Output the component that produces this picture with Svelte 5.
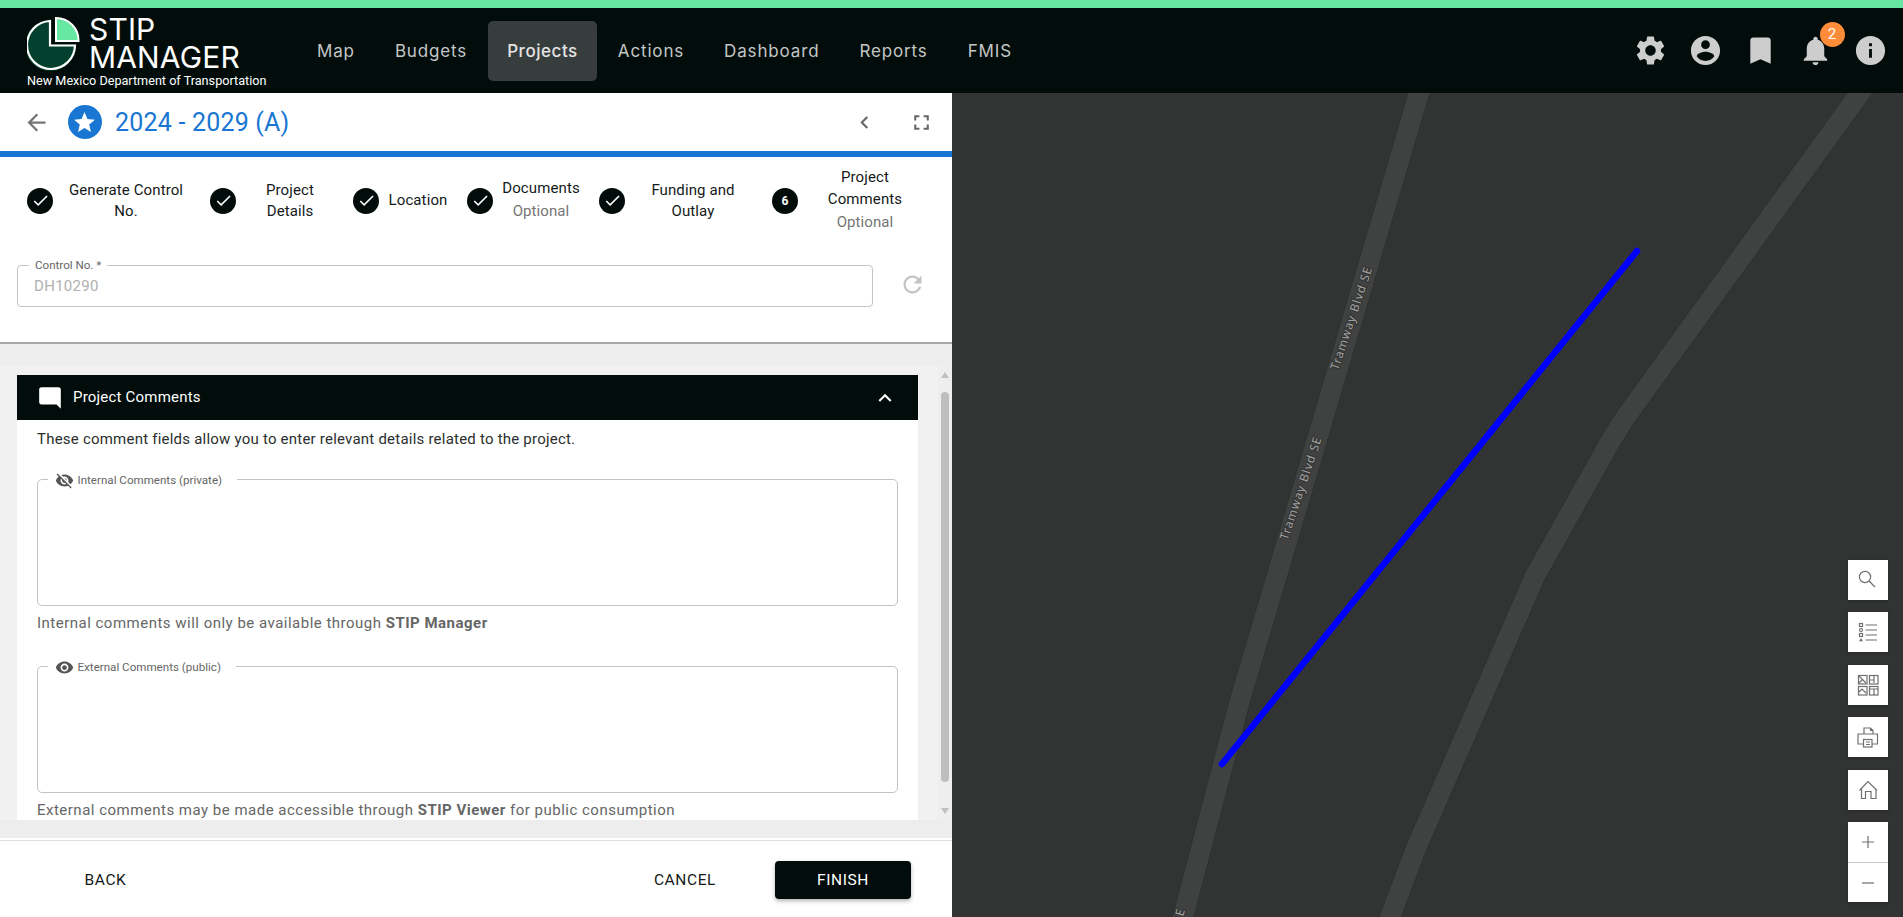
<script>
  const nav = ['Map', 'Budgets', 'Projects', 'Actions', 'Dashboard', 'Reports', 'FMIS'];
  const steps = [
    { id: 'a', lines: ['Generate Control', 'No.'] },
    { id: 'b', lines: ['Project', 'Details'] },
    { id: 'c', lines: ['Location'] },
    { id: 'd', lines: ['Documents'], optional: true },
    { id: 'e', lines: ['Funding and', 'Outlay'] },
    { id: 'f', lines: ['Project', 'Comments'], optional: true, num: '6' }
  ];
  const topIcons = [
    'M19.14 12.94c.04-.3.06-.61.06-.94 0-.32-.02-.64-.07-.94l2.03-1.58c.18-.14.23-.41.12-.61l-1.92-3.32c-.12-.22-.37-.29-.59-.22l-2.39.96c-.5-.38-1.03-.7-1.62-.94l-.36-2.54c-.04-.24-.24-.41-.48-.41h-3.84c-.24 0-.43.17-.47.41l-.36 2.54c-.59.24-1.13.57-1.62.94l-2.39-.96c-.22-.08-.47 0-.59.22L2.74 8.87c-.12.21-.08.47.12.61l2.03 1.58c-.05.3-.09.63-.09.94s.02.64.07.94l-2.03 1.58c-.18.14-.23.41-.12.61l1.92 3.32c.12.22.37.29.59.22l2.39-.96c.5.38 1.03.7 1.62.94l.36 2.54c.05.24.24.41.48.41h3.84c.24 0 .44-.17.47-.41l.36-2.54c.59-.24 1.13-.56 1.62-.94l2.39.96c.22.08.47 0 .59-.22l1.92-3.32c.12-.22.07-.47-.12-.61l-2.01-1.58zM12 15.6c-1.98 0-3.6-1.62-3.6-3.6s1.62-3.6 3.6-3.6 3.6 1.62 3.6 3.6-1.62 3.6-3.6 3.6z',
    'M12 2C6.48 2 2 6.48 2 12s4.48 10 10 10 10-4.48 10-10S17.52 2 12 2zm0 3c1.66 0 3 1.34 3 3s-1.34 3-3 3-3-1.34-3-3 1.34-3 3-3zm0 14.2c-2.5 0-4.71-1.28-6-3.22.03-1.99 4-3.08 6-3.08 1.99 0 5.97 1.09 6 3.08-1.29 1.94-3.5 3.22-6 3.22z',
    'M17 3H7c-1.1 0-1.99.9-1.99 2L5 21l7-3 7 3V5c0-1.1-.9-2-2-2z',
    'M12 22c1.1 0 2-.9 2-2h-4c0 1.1.89 2 2 2zm6-6v-5c0-3.07-1.64-5.64-4.5-6.32V4c0-.83-.67-1.5-1.5-1.5s-1.5.67-1.5 1.5v.68C7.63 5.36 6 7.92 6 11v5l-2 2v1h16v-1l-2-2z',
    'M12 2C6.48 2 2 6.48 2 12s4.48 10 10 10 10-4.48 10-10S17.52 2 12 2zm1 15h-2v-6h2v6zm0-8h-2V7h2v2z'
  ];
  const road1 = '1432,50 1419,93 1366,273 1284.5,550 1240,700 1183,917 1176,940';
  const road2 = '1878,68 1860,93 1625,418 1610,442 1535,576 1417,846 1390,917 1380,945';
</script>

<div class="app">
  <header class="topbar">
    <div class="brand">
      <div class="brand-row">
        <svg class="logo" viewBox="27 15 54 56" aria-hidden="true">
          <path d="M50 21A24 24 0 1 0 75 45.500H50Z" fill="#03402d" stroke="#03402d" stroke-width="3" transform="translate(-0.500 0.500)" />
          <path d="M50 21A24 24 0 1 0 75 45.500H50Z" fill="#03402d" stroke="#fff" stroke-width="2.200" />
          <path d="M56 18A22.500 22.500 0 0 1 78.500 41H56Z" fill="#66e8a2" stroke="#fff" stroke-width="2" />
        </svg>
        <div class="brand-name">STIP<br />MANAGER</div>
      </div>
      <div class="brand-sub">New Mexico Department of Transportation</div>
    </div>
    <nav class="nav">
      {#each nav as item}
        <span class="nav-item" class:active={item === 'Projects'}>{item}</span>
      {/each}
    </nav>
    <div class="top-icons">
      {#each topIcons as d, i}
        <div class="top-icon">
          <svg viewBox="0 0 24 24"><path {d} fill="#cdcdcd" /></svg>
          {#if i === 3}<span class="badge">2</span>{/if}
        </div>
      {/each}
    </div>
  </header>

  <main class="main">
    <section class="panel">
      <div class="title-row">
        <svg class="back" viewBox="0 0 24 24"><path d="M20 11H7.83l5.59-5.59L12 4l-8 8 8 8 1.41-1.41L7.83 13H20v-2z" /></svg>
        <span class="star">
          <svg viewBox="0 0 24 24"><path d="M12 17.27 18.18 21l-1.64-7.03L22 9.24l-7.19-.61L12 2 9.19 8.63 2 9.24l5.46 4.73L5.82 21z" /></svg>
        </span>
        <h1>2024 - 2029 (A)</h1>
        <svg class="collapse" viewBox="0 0 24 24"><path d="M15.41 7.41 14 6l-6 6 6 6 1.41-1.41L10.83 12z" /></svg>
        <svg class="fullscreen" viewBox="0 0 24 24"><path d="M7 14H5v5h5v-2H7v-3zm-2-4h2V7h3V5H5v5zm12 7h-3v2h5v-5h-2v3zM14 5v2h3v3h2V5h-5z" /></svg>
      </div>
      <div class="blue-bar"></div>

      <div class="stepper">
        {#each steps as s}
          <div class="step">
            <span class="step-dot">
              {#if s.num}{s.num}{:else}
                <svg viewBox="0 0 24 24"><path d="M9 16.17 4.83 12l-1.42 1.41L9 19 21 7l-1.41-1.41z" /></svg>
              {/if}
            </span>
            <div class="step-label {s.id}">
              {#each s.lines as l}<div>{l}</div>{/each}
              {#if s.optional}<div class="optional">Optional</div>{/if}
            </div>
          </div>
        {/each}
      </div>

      <div class="control-row">
        <div class="control-field">
          <span class="control-label">Control No. *</span>
          <span class="control-value">DH10290</span>
        </div>
        <svg class="refresh" viewBox="0 0 24 24"><path d="M17.65 6.35C16.2 4.9 14.21 4 12 4c-4.42 0-7.99 3.58-7.99 8s3.57 8 7.99 8c3.73 0 6.84-2.55 7.73-6h-2.08c-.82 2.33-3.04 4-5.65 4-3.31 0-6-2.69-6-6s2.69-6 6-6c1.66 0 3.14.69 4.22 1.78L13 11h7V4l-2.35 2.35z" /></svg>
      </div>

      <div class="band top"></div>

      <div class="scroller">
        <div class="scroll-content">
          <div class="acc-head">
            <svg class="acc-icon" viewBox="0 0 24 24"><path d="M21.99 4c0-1.1-.89-2-1.99-2H4c-1.1 0-2 .9-2 2v12c0 1.1.9 2 2 2h14l4 4-.01-18z" /></svg>
            <span class="acc-title">Project Comments</span>
            <svg class="acc-chevron" viewBox="0 0 24 24"><path d="M12 8l-6 6 1.41 1.41L12 10.83l4.59 4.58L18 14z" /></svg>
          </div>
          <div class="acc-body">
            <p class="intro">These comment fields allow you to enter relevant details related to the project.</p>

            <div class="area first">
              <div class="area-label private">
                <svg viewBox="0 0 24 24"><path d="M12 7c2.76 0 5 2.24 5 5 0 .65-.13 1.26-.36 1.83l2.92 2.92c1.51-1.26 2.7-2.89 3.43-4.75-1.73-4.39-6-7.5-11-7.5-1.4 0-2.74.25-3.98.7l2.16 2.16C10.74 7.13 11.35 7 12 7zM2 4.27l2.28 2.28.46.46C3.08 8.3 1.78 10.02 1 12c1.73 4.39 6 7.5 11 7.5 1.55 0 3.03-.3 4.38-.84l.42.42L19.73 22 21 20.73 3.27 3 2 4.27zM7.53 9.8l1.55 1.55c-.05.21-.08.43-.08.65 0 1.66 1.34 3 3 3 .22 0 .44-.03.65-.08l1.55 1.55c-.67.33-1.41.53-2.2.53-2.76 0-5-2.24-5-5 0-.79.2-1.53.53-2.2zm4.31-.78l3.15 3.15.02-.16c0-1.66-1.34-3-3-3l-.17.01z" /></svg>
                <span>Internal Comments (private)</span>
              </div>
            </div>
            <p class="helper">Internal comments will only be available through <b>STIP Manager</b></p>

            <div class="area second">
              <div class="area-label public">
                <svg viewBox="0 0 24 24"><path d="M12 4.5C7 4.5 2.73 7.61 1 12c1.73 4.39 6 7.5 11 7.5s9.27-3.11 11-7.5c-1.73-4.39-6-7.5-11-7.5zM12 17c-2.76 0-5-2.24-5-5s2.24-5 5-5 5 2.24 5 5-2.24 5-5 5zm0-8c-1.66 0-3 1.34-3 3s1.34 3 3 3 3-1.34 3-3-1.34-3-3-3z" /></svg>
                <span>External Comments (public)</span>
              </div>
            </div>
            <p class="helper">External comments may be made accessible through <b>STIP Viewer</b> for public consumption</p>
          </div>
        </div>
        <div class="scrollbar">
          <span class="arrow up"></span>
          <span class="thumb"></span>
          <span class="arrow down"></span>
        </div>
      </div>

      <div class="band bottom"></div>

      <footer class="footer">
        <div class="footer-inner">
          <span class="btn back-btn">BACK</span>
          <span class="btn cancel-btn">CANCEL</span>
          <span class="btn finish-btn">FINISH</span>
        </div>
      </footer>
    </section>

    <section class="map">
      <svg class="map-canvas" viewBox="952 93 951 824" aria-hidden="true">
        <polyline points={road1} class="road-edge" />
        <polyline points={road2} class="road-edge" />
        <polyline points={road1} class="road" />
        <polyline points={road2} class="road" />
        <line x1="1222" y1="764" x2="1637" y2="251" class="route" />
        <text class="road-label" transform="translate(1351 318) rotate(-71.5)">Tramway Blvd SE</text>
        <text class="road-label" transform="translate(1300.5 488) rotate(-71.5)">Tramway Blvd SE</text>
        <text class="road-label" transform="translate(1180 912) rotate(-75)">E</text>
      </svg>

      <div class="map-tools">
        <div class="tool">
          <svg viewBox="0 0 40 40"><circle cx="17" cy="17" r="5.600" /><path d="M21 21l6 6" /></svg>
        </div>
        <div class="tool">
          <svg viewBox="0 0 40 40">
            <path d="M17.500 13h11.500M17.500 18h11.500M17.500 23h11.500M17.500 28h11.500" />
            <rect x="11.500" y="11.500" width="3" height="3" /><circle cx="13" cy="18" r="1.500" />
            <rect x="11.500" y="21.500" width="3" height="3" /><path class="solid" d="M13 26l2 3.300h-4z" />
          </svg>
        </div>
        <div class="tool">
          <svg viewBox="0 0 40 40">
            <rect x="10.500" y="10.500" width="8.500" height="8.500" /><rect x="21.500" y="10.500" width="8.500" height="8.500" />
            <rect x="10.500" y="21.500" width="8.500" height="8.500" /><rect x="21.500" y="21.500" width="8.500" height="8.500" />
            <path d="M11 11l7 7M14 15l-3 3M22 15h4v-4M26 15v3M11 27l3-3 4 4M22 24h8M26 24v6" />
          </svg>
        </div>
        <div class="tool">
          <svg viewBox="0 0 40 40">
            <path d="M16 17v-6h6.500l2.500 2.500V17M22.500 11v2.500h2.500" />
            <path d="M15.500 27h-5.500v-10h19.500v10h-5.500" />
            <rect x="15.500" y="22.500" width="8.500" height="7.500" />
            <path d="M18 25h4M18 27.500h4" />
          </svg>
        </div>
        <div class="tool">
          <svg viewBox="0 0 40 40">
            <path d="M11.500 20.500l8.500-9 9 9M13.500 19v9.500h4v-7h5.500v7h5v-9.500" />
          </svg>
        </div>
        <div class="tool zoom">
          <div class="zoom-cell">
            <svg viewBox="0 0 40 40"><path d="M20 14v12M14 20h12" /></svg>
          </div>
          <div class="zoom-cell">
            <svg viewBox="0 0 40 40"><path d="M14 20h12" /></svg>
          </div>
        </div>
      </div>
    </section>
  </main>
</div>

<style>
  :global(body) {
    margin: 0;
    font-family: Roboto, "Liberation Sans", sans-serif;
    overflow: hidden;
  }
  .app {
    width: 1903px;
    height: 917px;
    display: flex;
    flex-direction: column;
    overflow: hidden;
  }

  /* top bar */
  .topbar {
    box-sizing: border-box;
    height: 93px;
    border-top: 8px solid #66e8a2;
    background: #020d0b;
    display: flex;
    align-items: center;
    padding: 0 15.5px 0 27px;
    flex: none;
  }
  .brand {
    width: 271px;
    flex: none;
    align-self: flex-start;
    margin-top: 7px;
    color: #fff;
  }
  .brand-row {
    display: flex;
    gap: 8px;
    height: 56px;
  }
  .logo {
    width: 54px;
    height: 56px;
    flex: none;
  }
  .brand-name {
    font-family: Inter, sans-serif;
    font-size: 30px;
    font-weight: 400;
    line-height: 27.5px;
    padding-top: 1px;
    letter-spacing: 0.15px;
  }
  .brand-sub {
    margin-top: 2px;
    font-size: 12.65px;
    font-weight: 400;
    line-height: 15px;
    white-space: nowrap;
  }
  .nav {
    display: flex;
    gap: 2px;
    align-items: center;
  }
  .nav-item {
    height: 60px;
    display: flex;
    align-items: center;
    padding: 0 19px;
    border-radius: 5px;
    font-family: Inter, sans-serif;
    font-size: 17px;
    letter-spacing: 0.85px;
    color: #c4c6c5;
  }
  .nav-item.active {
    background: #373d3c;
    color: #e4e4e4;
    font-weight: 500;
    letter-spacing: 0.55px;
  }
  .top-icons {
    margin-left: auto;
    display: flex;
    gap: 20px;
  }
  .top-icon {
    width: 35px;
    height: 35px;
    position: relative;
  }
  .top-icon svg {
    width: 35px;
    height: 35px;
    display: block;
  }
  .badge {
    position: absolute;
    left: 22px;
    top: -11px;
    width: 25px;
    height: 25px;
    border-radius: 50%;
    background: #ff8c38;
    color: #fff;
    font-size: 15px;
    line-height: 25px;
    text-align: center;
  }

  /* layout */
  .main {
    flex: 1;
    display: flex;
    min-height: 0;
  }
  .panel {
    width: 952px;
    flex: none;
    display: flex;
    flex-direction: column;
    background: #fff;
  }

  /* title */
  .title-row {
    height: 58px;
    display: flex;
    align-items: center;
    padding-left: 22.5px;
    flex: none;
    box-sizing: border-box;
  }
  .back {
    width: 27px;
    height: 27px;
    fill: #757575;
    flex: none;
  }
  .star {
    width: 34px;
    height: 34px;
    border-radius: 50%;
    background: #1976d2;
    margin-left: 18px;
    display: flex;
    align-items: center;
    justify-content: center;
    flex: none;
  }
  .star svg {
    width: 25px;
    height: 25px;
    fill: #fff;
  }
  h1 {
    margin: 0 0 0 13.5px;
    font-size: 25px;
    font-weight: 400;
    color: #1976d2;
    letter-spacing: 0.2px;
  }
  .collapse {
    margin-left: auto;
    width: 25px;
    height: 25px;
    fill: #666;
    flex: none;
  }
  .fullscreen {
    width: 25px;
    height: 25px;
    fill: #666;
    margin-left: 32px;
    margin-right: 18.5px;
    flex: none;
  }
  .blue-bar {
    height: 6px;
    background: #1976d2;
    flex: none;
  }

  /* stepper */
  .stepper {
    height: 87px;
    box-sizing: border-box;
    padding-left: 27px;
    display: grid;
    grid-template-columns: 183px 143px 114px 132px 173px 1fr;
    align-items: center;
    flex: none;
  }
  .step {
    display: flex;
    align-items: center;
    gap: 8px;
  }
  .step-dot {
    width: 26px;
    height: 26px;
    border-radius: 50%;
    background: #020d0b;
    color: #fff;
    flex: none;
    display: flex;
    align-items: center;
    justify-content: center;
    font-size: 12px;
    font-weight: 700;
  }
  .step-dot svg {
    width: 19px;
    height: 19px;
    fill: #fff;
  }
  .step-label {
    font-size: 15px;
    line-height: 21px;
    text-align: center;
    color: #141a19;
    letter-spacing: 0.1px;
    white-space: nowrap;
  }
  .step-label.a { width: 130px; }
  .step-label.b { width: 92px; }
  .step-label.c { width: 62px; }
  .step-label.d { width: 80px; line-height: 23px; padding-bottom: 2px; }
  .step-label.e { width: 120px; }
  .step-label.f { width: 118px; line-height: 22.5px; padding-bottom: 2px; }
  .optional {
    color: #757575;
  }

  /* control no */
  .control-row {
    box-sizing: border-box;
    margin-top: 21px;
    padding: 0 0 35px 17px;
    height: 79px;
    border-bottom: 2px solid #a8a8a8;
    display: flex;
    align-items: flex-start;
    gap: 25.5px;
    flex: none;
  }
  .control-field {
    box-sizing: border-box;
    width: 856px;
    height: 42px;
    border: 1px solid #c4c4c4;
    border-radius: 4px;
    position: relative;
    display: flex;
    align-items: center;
    padding: 0 16px 1px;
  }
  .control-label {
    position: absolute;
    left: 11px;
    top: -8px;
    padding: 0 6px;
    background: #fff;
    font-size: 11.6px;
    line-height: 14px;
    color: #666;
  }
  .control-value {
    font-size: 15px;
    letter-spacing: 0.3px;
    color: #b0b0b0;
  }
  .refresh {
    width: 27px;
    height: 27px;
    fill: #c4c4c4;
    margin-top: 5.5px;
    flex: none;
  }

  /* bands */
  .band {
    background: #ededed;
    flex: none;
  }
  .band.top { height: 21px; }
  .band.bottom { height: 18px; }

  /* scroll area */
  .scroller {
    height: 455px;
    flex: none;
    display: flex;
    background: #f1f1f1;
    overflow: hidden;
  }
  .scroll-content {
    box-sizing: border-box;
    width: 938px;
    padding: 10px 20px 0 17px;
    flex: none;
  }
  .acc-head {
    height: 45px;
    background: #020d0b;
    display: flex;
    align-items: center;
    color: #fff;
    padding-left: 20px;
  }
  .acc-icon {
    width: 26px;
    height: 26px;
    fill: #fff;
    flex: none;
    margin-top: 1px;
  }
  .acc-title {
    margin-left: 10px;
    font-size: 15px;
    font-weight: 400;
    letter-spacing: 0.2px;
    margin-bottom: 1px;
  }
  .acc-chevron {
    margin-left: auto;
    margin-right: 20px;
    width: 26px;
    height: 26px;
    fill: #fff;
  }
  .acc-body {
    background: #fff;
    padding: 8px 20px 12px 20px;
  }
  .intro {
    margin: 0;
    font-size: 15px;
    line-height: 22px;
    letter-spacing: 0.22px;
    color: #2a2f2e;
  }
  .area {
    box-sizing: border-box;
    height: 127px;
    border: 1px solid #c4c4c4;
    border-radius: 5px;
    position: relative;
  }
  .area.first { margin-top: 29px; }
  .area.second { margin-top: 32px; }
  .area-label {
    position: absolute;
    left: 10px;
    top: -10px;
    height: 20px;
    background: #fff;
    padding: 0 15px 0 6.5px;
    display: flex;
    align-items: center;
    gap: 4px;
    font-size: 11.6px;
    color: #666;
    white-space: nowrap;
  }
  .area-label svg {
    width: 19px;
    height: 19px;
    fill: #555;
    flex: none;
  }
  .helper {
    margin: 6px 0 0;
    font-size: 15px;
    line-height: 22px;
    letter-spacing: 0.49px;
    color: #666;
    white-space: nowrap;
  }
  .helper b {
    font-weight: 700;
  }

  /* scrollbar */
  .scrollbar {
    width: 14px;
    background: #eee;
    position: relative;
    flex: none;
  }
  .thumb {
    position: absolute;
    left: 3px;
    top: 27px;
    width: 8px;
    height: 390px;
    border-radius: 4px;
    background: #bebebe;
  }
  .arrow {
    position: absolute;
    left: 2.5px;
    width: 0;
    height: 0;
    border-left: 4.5px solid transparent;
    border-right: 4.5px solid transparent;
  }
  .arrow.up {
    top: 7px;
    border-bottom: 6px solid #c0c0c0;
  }
  .arrow.down {
    top: 443px;
    border-top: 6px solid #c0c0c0;
  }

  /* footer */
  .footer {
    flex: 1;
    padding-top: 2px;
    display: flex;
    min-height: 0;
  }
  .footer-inner {
    flex: 1;
    border-top: 1px solid #dedede;
    display: flex;
    align-items: center;
    padding: 2px 41px 0 84.5px;
  }
  .btn {
    font-size: 15.5px;
    font-weight: 400;
    letter-spacing: 0.6px;
    color: #141a19;
  }
  .cancel-btn {
    margin-left: auto;
  }
  .finish-btn {
    box-sizing: border-box;
    width: 136px;
    height: 38px;
    margin-left: 59px;
    border-radius: 4px;
    background: #020d0b;
    color: #fff;
    display: flex;
    align-items: center;
    justify-content: center;
    box-shadow: 0 2px 4px rgba(0, 0, 0, 0.3);
  }

  /* map */
  .map {
    flex: 1;
    position: relative;
    background: #323433;
    overflow: hidden;
  }
  .map-canvas {
    position: absolute;
    inset: 0;
    width: 100%;
    height: 100%;
  }
  .road {
    fill: none;
    stroke: #404241;
    stroke-width: 20;
    stroke-linejoin: round;
  }
  .road-edge {
    fill: none;
    stroke: #2e302f;
    stroke-width: 21.5;
    stroke-linejoin: round;
  }
  .route {
    stroke: #0000ff;
    stroke-width: 6.5;
    stroke-linecap: round;
  }
  .road-label {
    font-family: "Noto Sans", "Open Sans", sans-serif;
    font-size: 12px;
    letter-spacing: 0.9px;
    fill: #a0a0a0;
    stroke: #333;
    stroke-width: 2px;
    paint-order: stroke;
    text-anchor: middle;
    dominant-baseline: central;
  }
  .map-tools {
    position: absolute;
    left: 896px;
    top: 467px;
    width: 40px;
    display: flex;
    flex-direction: column;
    gap: 12.4px;
  }
  .tool {
    width: 40px;
    height: 40px;
    background: #fff;
    box-shadow: 0 1px 3px rgba(0, 0, 0, 0.25);
  }
  .tool.zoom {
    height: 80px;
  }
  .zoom-cell {
    height: 40px;
  }
  .zoom-cell + .zoom-cell {
    box-sizing: border-box;
    border-top: 1px solid #ccc;
  }
  .tool svg {
    width: 40px;
    height: 40px;
    display: block;
    fill: none;
    stroke: #707070;
    stroke-width: 1.2;
  }
  .tool .solid {
    fill: #707070;
    stroke: none;
  }
</style>
